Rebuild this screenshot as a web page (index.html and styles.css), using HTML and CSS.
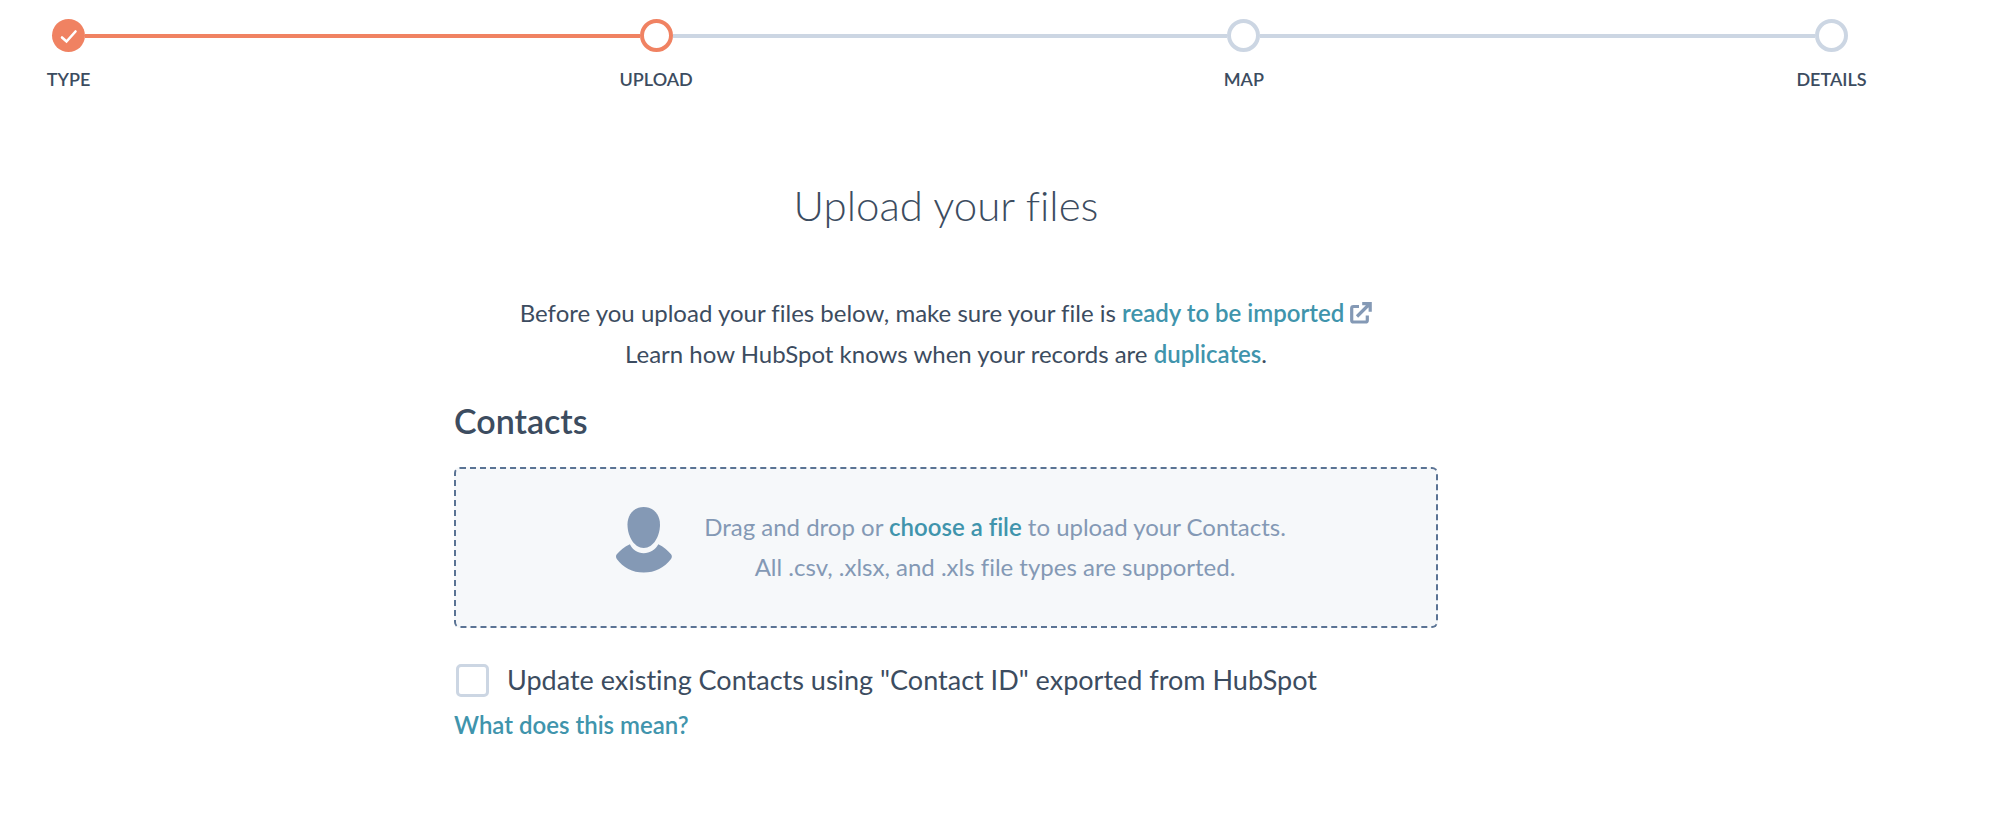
FILE: index.html
```html
<!DOCTYPE html>
<html lang="en">
<head>
<meta charset="utf-8">
<meta name="viewport" content="width=device-width, initial-scale=1">
<title>Upload your files</title>
<link rel="stylesheet" href="styles.css">
</head>
<body>
<div class="page">
  <ol class="steps">
    <li class="step step-done">
      <span class="step-dot"><svg class="step-check" viewBox="0 0 33 33" aria-hidden="true"><path d="M10 18.500l4.500 4 9-10"/></svg></span>
      <span class="step-line"></span>
      <span class="step-label">TYPE</span>
    </li>
    <li class="step step-current" aria-current="step">
      <span class="step-dot"></span>
      <span class="step-line"></span>
      <span class="step-label">UPLOAD</span>
    </li>
    <li class="step">
      <span class="step-dot"></span>
      <span class="step-line"></span>
      <span class="step-label">MAP</span>
    </li>
    <li class="step step-last">
      <span class="step-dot"></span>
      <span class="step-label">DETAILS</span>
    </li>
  </ol>
  <main class="content">
    <h1 class="title">Upload your files</h1>
    <div class="intro">
      <p>Before you upload your files below, make sure your file is <a class="link" href="#ready">ready to be imported <svg class="external" viewBox="0 0 22 22" aria-hidden="true"><path d="M9 4.500H3.500A1.800 1.800 0 0 0 1.700 6.300V18.200a1.800 1.800 0 0 0 1.800 1.800h12a1.800 1.800 0 0 0 1.800-1.800V13.500M7 14.500L19.500 2M12.200 1.700h8v8"/></svg></a></p>
      <p>Learn how HubSpot knows when your records are <a class="link" href="#duplicates">duplicates</a>.</p>
    </div>
    <h2 class="subtitle">Contacts</h2>
    <section class="dropzone">
      <svg class="person" viewBox="0 0 56 66" aria-hidden="true"><path d="M27.700 0C37.500 0 44 7.400 44 17.500C44 29 37.500 41 27.700 41S11.500 29 11.500 17.500C11.500 7.400 18 0 27.700 0z"/><path d="M13.900 37.300C16.500 43 21.500 46.200 27.700 46.200S39.500 43 42.300 37.300C47.500 39.800 51.800 43.500 55 47.300Q56.700 49.500 55 52C48.500 60.500 39 65.600 27.700 65.600S7 60.500.8 52Q-.8 49.500.8 47.300C4 43.500 8.500 39.800 13.900 37.300z"/></svg>
      <div class="drop-text">
        <p>Drag and drop or <button class="link choose" type="button">choose a file</button> to upload your Contacts.</p>
        <p>All .csv, .xlsx, and .xls file types are supported.</p>
      </div>
    </section>
    <label class="option"><input class="checkbox" type="checkbox"><span>Update existing Contacts using "Contact ID" exported from HubSpot</span></label>
    <a class="link help" href="#help">What does this mean?</a>
  </main>
</div>
</body>
</html>
```
FILE: styles.css
```css
* {
  box-sizing: border-box;
}

body {
  margin: 0;
  background: #fff;
  color: #3c4c60;
  font-family: Lato, "Open Sans", sans-serif;
  font-size: 24px;
  font-variant-ligatures: none;
  line-height: 40px;
}

h1, h2, p {
  margin: 0;
}

.page {
  padding: 19px 107px 40px 0;
}

.steps {
  display: flex;
  list-style: none;
  margin: 0;
  padding: 0 44px 0 52px;
}

.step {
  display: grid;
  flex: 1;
  grid-template-columns: 33px 1fr;
  align-items: center;
  row-gap: 15px;
}

.step-last {
  flex: none;
  grid-template-columns: 33px;
}

.step-dot {
  width: 33px;
  height: 33px;
  border: 4px solid #ccd6e3;
  border-radius: 50%;
}

.step-line {
  height: 4px;
  background: #ccd6e3;
}

.step-done .step-dot {
  border: 0;
  background: #f08262;
}

.step-done .step-line {
  background: #f08262;
}

.step-current .step-dot {
  border-color: #f08262;
}

.step-check {
  display: block;
  fill: none;
  stroke: #fff;
  stroke-width: 2.6;
  stroke-linecap: round;
}

.step-label {
  grid-column: 1;
  justify-self: center;
  width: max-content;
  font-size: 18px;
  font-weight: 600;
  line-height: 24px;
}

.content {
  max-width: 984px;
  margin: 0 auto;
}

.title {
  margin-top: 90px;
  font-size: 42px;
  font-weight: 300;
  line-height: 48px;
  text-align: center;
}

.intro {
  margin-top: 63px;
  line-height: 41px;
  text-align: center;
}

.link {
  color: #4094ac;
  font-weight: 600;
  text-decoration: none;
}

.external {
  width: 22px;
  height: 22px;
  fill: none;
  stroke: #8499b5;
  stroke-width: 3.2;
  vertical-align: -2px;
}

.subtitle {
  margin-top: 27px;
  font-size: 34px;
  font-weight: 600;
  line-height: 40px;
}

.dropzone {
  display: flex;
  align-items: flex-start;
  justify-content: center;
  gap: 32px;
  margin-top: 26px;
  padding: 38px 0 39px 10px;
  border: 2px dashed #5a7394;
  border-radius: 6px;
  background: #f6f8fa;
  color: #8499b5;
  text-align: center;
}

.person {
  width: 56px;
  height: 66px;
  flex: none;
  fill: #8499b5;
}

.choose {
  padding: 0;
  border: 0;
  background: none;
  font-family: inherit;
  font-size: inherit;
  font-variant-ligatures: none;
  line-height: inherit;
  cursor: pointer;
}

.option {
  display: flex;
  align-items: center;
  gap: 18px;
  margin-top: 32px;
  padding-left: 2px;
  font-size: 27px;
}

.checkbox {
  appearance: none;
  width: 33px;
  height: 33px;
  flex: none;
  margin: 0;
  border: 3px solid #ccd6e3;
  border-radius: 5px;
  background: #fff;
}

.checkbox:checked {
  background: #4094ac;
}

.help {
  display: inline-block;
  margin-top: 5px;
}
```
